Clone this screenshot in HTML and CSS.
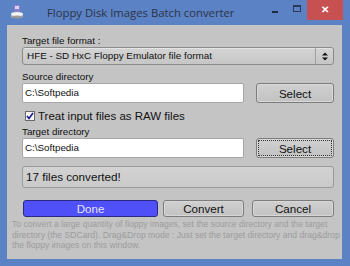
FILE: index.html
```html
<!DOCTYPE html>
<html lang="en">
<head>
  <meta charset="UTF-8">
  <title>Floppy Disk Images Batch converter</title>
  <link rel="stylesheet" href="styles.css">
</head>
<body>
  <div class="window">
    <div class="titlebar">
      <svg class="app-icon" width="14" height="14" viewBox="0 0 14 14">
        <rect x="4" y="0" width="6" height="8" fill="#8a7fc8"/>
        <rect x="5" y="1" width="4" height="3" fill="#d8d4f0"/>
        <rect x="1" y="9" width="12" height="3" fill="#bdbdbd"/>
        <ellipse cx="7" cy="9" rx="6" ry="2" fill="#f4f4f4"/>
        <ellipse cx="7" cy="12" rx="6" ry="1.5" fill="#9a9a9a"/>
      </svg>
      <div class="title">Floppy Disk Images Batch converter</div>
      <div class="controls">
        <span class="ctl min"></span>
        <span class="ctl max"></span>
        <span class="ctl close">&#x2715;</span>
      </div>
    </div>

    <div class="client">
      <div class="label">Target file format :</div>
      <div class="select">
        <span class="select-text">HFE - SD HxC Floppy Emulator file format</span>
        <span class="select-arrow">
          <svg width="6" height="9" viewBox="0 0 6 9"><path d="M0 3.5 L3 0.5 L6 3.5 Z M0 5.5 L3 8.5 L6 5.5 Z" fill="#111"/></svg>
        </span>
      </div>

      <div class="label">Source directory</div>
      <div class="row">
        <div class="input">C:\Softpedia</div>
        <button class="btn">Select</button>
      </div>

      <label class="check">
        <span class="box">
          <svg width="8" height="8" viewBox="0 0 8 8"><path d="M1 4 L3 6.5 L7 1" stroke="#1a1a8c" stroke-width="1.6" fill="none"/></svg>
        </span>
        Treat input files as RAW files
      </label>

      <div class="label">Target directory</div>
      <div class="row">
        <div class="input">C:\Softpedia</div>
        <button class="btn focused">Select</button>
      </div>

      <div class="status">17 files converted!</div>

      <div class="actions">
        <button class="btn done">Done</button>
        <button class="btn convert">Convert</button>
        <button class="btn cancel">Cancel</button>
      </div>

      <div class="help">
        <div>To convert a large quantity of floppy images, set the source directory and the target</div>
        <div>directory (the SDCard). Drag&amp;Drop mode : Just set the target directory and drag&amp;drop</div>
        <div>the floppy images on this window.</div>
      </div>
    </div>
  </div>
</body>
</html>
```

FILE: styles.css
```css
body {
  margin: 0;
  background: #5b82c5;
  font-family: 'Liberation Sans', Arial, sans-serif;
}

.window {
  width: 350px;
  height: 266px;
  background: #5b82c5;
}

.titlebar {
  height: 25px;
  display: flex;
  align-items: flex-start;
}

.app-icon {
  margin: 5px 0 0 10px;
}

.title {
  margin: 4px 0 0 23px;
  font-family: 'Open Sans', 'DejaVu Sans', sans-serif;
  font-size: 11.3px;
  line-height: 17px;
  color: #2c3444;
}

.controls {
  margin-left: auto;
  margin-right: 7px;
  display: flex;
}

.ctl {
  display: block;
  width: 22px;
  height: 20px;
  position: relative;
}

.ctl.min::after {
  content: "";
  position: absolute;
  left: 9px;
  top: 11px;
  width: 6px;
  height: 2px;
  background: #1c2a40;
}

.ctl.max::after {
  content: "";
  position: absolute;
  left: 8px;
  top: 5px;
  width: 6px;
  height: 4px;
  border: 1px solid #2a3a58;
  border-top-width: 2px;
}

.ctl.close {
  width: 36px;
  background: #c75050;
  color: #fff;
  font-size: 10px;
  font-weight: bold;
  text-align: center;
  line-height: 19px;
}

.client {
  margin: 0 8px 0 7px;
  height: 234px;
  background: #c4c4c4;
  padding: 9px 8px 0 15px;
  box-sizing: border-box;
  color: #111;
}

.label {
  height: 13px;
  line-height: 13px;
  font-size: 9.8px;
}

.select {
  display: flex;
  height: 16px;
  border: 1px solid #8a8a8a;
  border-radius: 3px;
  background: linear-gradient(#d4d4d4, #c6c6c6);
  box-shadow: inset 0 1px 0 #e4e4e4;
  margin-bottom: 5px;
}

.select-text {
  flex: 1;
  padding-left: 4px;
  line-height: 16px;
  font-size: 9.9px;
}

.select-arrow {
  width: 17px;
  border-left: 1px solid #a0a0a0;
  display: flex;
  align-items: center;
  justify-content: center;
}

.row {
  display: flex;
  gap: 12px;
}

.input {
  flex: 1;
  height: 18px;
  line-height: 18px;
  border: 1px solid #a6a6a6;
  border-radius: 2px;
  background: #fff;
  padding-left: 2px;
  font-size: 9.8px;
}

.btn {
  font-family: 'Liberation Sans', Arial, sans-serif;
  font-size: 11.6px;
  color: #111;
  height: 20px;
  width: 78px;
  padding: 0;
  border: 1px solid #7c7c7c;
  border-radius: 3px;
  background: linear-gradient(#d0d0d0, #c2c2c2);
  box-shadow: inset 0 0 0 1px #d8d8d8;
}

.btn.focused {
  outline: 1px dotted #333;
  outline-offset: -3px;
}

.check {
  display: flex;
  align-items: center;
  height: 18px;
  margin-top: 4px;
  font-size: 11.5px;
}

.box {
  width: 8px;
  height: 8px;
  border: 1px solid #6a6a6a;
  background: #f4f4f4;
  margin-left: 3px;
  margin-right: 3px;
  display: flex;
  align-items: center;
  justify-content: center;
}

.status {
  margin-top: 8px;
  height: 20px;
  line-height: 20px;
  border: 1px solid #9a9a9a;
  border-radius: 3px;
  background: linear-gradient(#d2d2d2, #cacaca);
  padding-left: 3px;
  font-size: 11.7px;
}

.actions {
  display: flex;
  margin-top: 12px;
}

.actions .btn {
  height: 17px;
  line-height: 15px;
}

.btn.done {
  width: 135px;
  margin-left: 1px;
  background: #5050f8;
  border-color: #2a2a80;
  color: #e4e4ff;
  box-shadow: none;
}

.btn.convert {
  width: 81px;
  margin-left: 5px;
}

.btn.cancel {
  width: 82px;
  margin-left: 8px;
}

.help {
  margin: 2px 0 0 -10px;
  font-size: 8.6px;
  line-height: 10.7px;
  color: #9c9c9c;
  white-space: nowrap;
}
```
